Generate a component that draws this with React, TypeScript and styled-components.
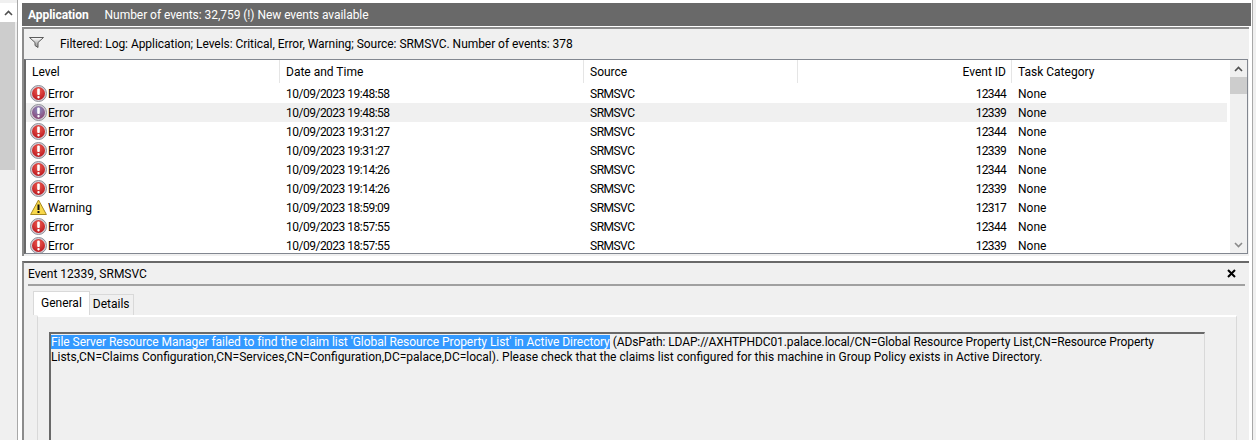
import React from "react";
import styled, { createGlobalStyle } from "styled-components";

const GlobalStyle = createGlobalStyle`
  html, body {
    margin: 0;
    padding: 0;
    height: 440px;
    overflow: hidden;
    background: #f0f0f0;
    font-family: "Roboto", "Liberation Sans", sans-serif;
    font-size: 12px;
    color: #000;
  }
`;

const Screen = styled.div`
  display: flex;
  width: 1256px;
  height: 440px;
  overflow: hidden;
`;

const SideScroll = styled.div`
  width: 17px;
  flex: none;
  display: flex;
  flex-direction: column;
  border-right: 1px solid #a8a8a8;
  padding-top: 3px;
`;

const SideArrow = styled.div`
  height: 19px;
  display: flex;
  align-items: center;
  justify-content: center;
  background: #fff;
`;

const SideThumb = styled.div`
  height: 148px;
  width: 15px;
  background: #cdcdcd;
`;

const Main = styled.div`
  flex: none;
  width: 1235px;
  box-sizing: border-box;
  padding: 3px 1px 0 4px;
  display: flex;
  flex-direction: column;
  background: #fff;
  border-right: 1px solid #a8a8a8;
`;

const TitleBar = styled.div`
  height: 23px;
  flex: none;
  box-sizing: border-box;
  padding: 1px 0 0 6px;
  background: #696969;
  color: #fff;
  display: flex;
  align-items: center;
  gap: 16px;
  line-height: 22px;
  letter-spacing: -0.05px;
`;

const TitleName = styled.span`
  font-weight: 700;
`;

const ListPane = styled.div`
  margin: 1px 2px 0 0;
  height: 229px;
  flex: none;
  background: #f0f0f0;
  border-top: 2px solid #8c8c8c;
  border-left: 2px solid #8c8c8c;
  display: flex;
  flex-direction: column;
  box-sizing: border-box;
`;

const FilterBar = styled.div`
  height: 30px;
  flex: none;
  display: flex;
  align-items: center;
  padding-left: 5px;
  gap: 16px;
  letter-spacing: -0.05px;
`;

const FunnelSlot = styled.div`
  display: flex;
  margin-bottom: 3px;
`;

const Table = styled.div`
  height: 195px;
  box-sizing: border-box;
  flex: none;
  margin: 0 1px 0 0;
  background: #fff;
  border: 1px solid #828790;
  border-left: 2px solid #696969;
  display: flex;
  overflow: hidden;
`;

const TableBody = styled.div`
  flex: 1;
  min-width: 0;
  overflow: hidden;
`;

const columns = "254px 304px 214px 214px 1fr";

const HeaderRow = styled.div`
  display: grid;
  grid-template-columns: ${columns};
  height: 24px;
`;

const HeaderCell = styled.div<{ $right?: boolean }>`
  padding: 0 5px 0 6px;
  line-height: 25px;
  height: 23px;
  border-right: 1px solid #e5e5e5;
  text-align: ${(p) => (p.$right ? "right" : "left")};
  &:last-child {
    border-right: none;
  }
`;

const Row = styled.div<{ $selected?: boolean }>`
  display: grid;
  grid-template-columns: ${columns};
  grid-template-rows: 19px;
  height: 19px;
  line-height: 19px;
  background: ${(p) => (p.$selected ? "#f0f0f0" : "#fff")};
`;

const Cell = styled.div<{ $right?: boolean; $spacing?: number }>`
  padding: 1px 6px 0;
  text-align: ${(p) => (p.$right ? "right" : "left")};
  white-space: nowrap;
  letter-spacing: ${(p) => p.$spacing ?? 0}px;
`;

const LevelCell = styled.div`
  display: flex;
  align-items: center;
  padding-left: 4px;
  gap: 1px;
`;

const LevelLabel = styled.span`
  padding-top: 2px;
`;

const TableScroll = styled.div`
  width: 17px;
  margin-left: 3px;
  flex: none;
  display: flex;
  flex-direction: column;
  background: #f0f0f0;
`;

const ArrowButton = styled.div`
  height: 17px;
  display: flex;
  align-items: center;
  justify-content: center;
`;

const TableThumb = styled.div`
  height: 17px;
  background: #cdcdcd;
`;

const ScrollGap = styled.div`
  flex: 1;
`;

const DetailPane = styled.div`
  margin: 5px 2px 0 0;
  flex: 1;
  background: #f0f0f0;
  border-top: 2px solid #696969;
  border-left: 2px solid #8c8c8c;
  padding: 0 4px 0 4px;
  display: flex;
  flex-direction: column;
  min-height: 0;
`;

const DetailHead = styled.div`
  height: 23px;
  flex: none;
  box-sizing: border-box;
  display: flex;
  align-items: center;
  justify-content: space-between;
  padding: 0 9px 0 0;
  border-bottom: 2px solid #a0a0a0;
`;

const Tabs = styled.div`
  display: flex;
  align-items: flex-end;
  height: 29px;
  flex: none;
  padding-left: 5px;
`;

const Tab = styled.div<{ $active?: boolean }>`
  height: ${(p) => (p.$active ? 24 : 21)}px;
  line-height: ${(p) => (p.$active ? 22 : 19)}px;
  padding: 0 ${(p) => (p.$active ? 7 : 3)}px;
  border: 1px solid #d9d9d9;
  border-bottom: none;
  box-sizing: border-box;
  border-left-width: ${(p) => (p.$active ? 1 : 0)}px;
  background: ${(p) => (p.$active ? "#fff" : "#f0f0f0")};
`;

const TabPanel = styled.div`
  flex: 1;
  margin: 0 8px 0 9px;
  border: 1px solid #d9d9d9;
  border-top: 2px solid #fff;
  border-bottom: none;
  padding: 15px 31px 0 11px;
  min-height: 0;
`;

const Message = styled.div`
  height: 200px;
  border-top: 2px solid #696969;
  border-left: 2px solid #696969;
  border-right: 1px solid #d9d9d9;
  padding: 1px 0 0 0;
  line-height: 15px;
`;

const Highlight = styled.span`
  background: #3399ff;
  color: #fff;
  letter-spacing: -0.05px;
`;

const TightText = styled.span`
  letter-spacing: -0.1px;
`;

const ErrorIcon = ({ faded, id }: { faded?: boolean; id: string }) => (
  <svg width="17" height="17" viewBox="0 0 17 17">
    <defs>
      <radialGradient id={id} cx="50%" cy="30%" r="75%">
        <stop offset="0%" stopColor={faded ? "#8b8fc4" : "#ee5a50"} />
        <stop offset="100%" stopColor={faded ? "#8a3f6e" : "#b8141c"} />
      </radialGradient>
    </defs>
    <circle cx="8.5" cy="8.5" r="8" fill="#d4d0d8" stroke="#8f8f98" strokeWidth="1" />
    <circle cx="8.5" cy="8.5" r="6.5" fill={`url(#${id})`} />
    <rect x="7.2" y="3.5" width="2.6" height="6.5" rx="0.9" fill="#fff" />
    <rect x="7.3" y="11" width="2.4" height="2.4" rx="1.1" fill="#fff" />
  </svg>
);

const WarningIcon = () => (
  <svg width="17" height="17" viewBox="0 0 17 17">
    <path d="M8.5 1 L16.4 15.5 H0.6 Z" fill="#f8d84a" stroke="#a88a20" strokeWidth="1" strokeLinejoin="round" />
    <rect x="7.5" y="5.5" width="2" height="5.5" fill="#111" />
    <rect x="7.5" y="12" width="2" height="2" fill="#111" />
  </svg>
);

const FunnelIcon = () => (
  <svg width="15" height="11" viewBox="0 0 15 11">
    <defs>
      <linearGradient id="funnel" x1="0" y1="0" x2="0" y2="1">
        <stop offset="0%" stopColor="#fff" />
        <stop offset="100%" stopColor="#8a8a8a" />
      </linearGradient>
    </defs>
    <path d="M0.5 0.5 H14.5 L9 5.5 V10.5 L6 8.5 V5.5 Z" fill="url(#funnel)" stroke="#5c5c5c" strokeWidth="1" />
  </svg>
);

const Chevron = ({ down }: { down?: boolean }) => (
  <svg width="9" height="6" viewBox="0 0 9 6">
    <path d={down ? "M1 1 L4.5 4.5 L8 1" : "M1 5 L4.5 1.5 L8 5"} fill="none" stroke={down ? "#8a8a8a" : "#505050"} strokeWidth="1.6" />
  </svg>
);

const CloseIcon = () => (
  <svg width="9" height="9" viewBox="0 0 9 9">
    <path d="M1 1 L8 8 M8 1 L1 8" stroke="#000" strokeWidth="2" />
  </svg>
);

const events = [
  { level: "Error", time: "10/09/2023 19:48:58", id: "12344" },
  { level: "Error", time: "10/09/2023 19:48:58", id: "12339", selected: true },
  { level: "Error", time: "10/09/2023 19:31:27", id: "12344" },
  { level: "Error", time: "10/09/2023 19:31:27", id: "12339" },
  { level: "Error", time: "10/09/2023 19:14:26", id: "12344" },
  { level: "Error", time: "10/09/2023 19:14:26", id: "12339" },
  { level: "Warning", time: "10/09/2023 18:59:09", id: "12317" },
  { level: "Error", time: "10/09/2023 18:57:55", id: "12344" },
  { level: "Error", time: "10/09/2023 18:57:55", id: "12339" },
];

const App: React.FC = () => (
  <>
    <GlobalStyle />
    <Screen>
      <SideScroll>
        <SideArrow>
          <Chevron />
        </SideArrow>
        <SideThumb />
      </SideScroll>
      <Main>
        <TitleBar>
          <TitleName>Application</TitleName>
          <span>Number of events: 32,759 (!) New events available</span>
        </TitleBar>
        <ListPane>
          <FilterBar>
            <FunnelSlot>
              <FunnelIcon />
            </FunnelSlot>
            <span>Filtered: Log: Application; Levels: Critical, Error, Warning; Source: SRMSVC. Number of events: 378</span>
          </FilterBar>
          <Table>
            <TableBody>
              <HeaderRow>
                <HeaderCell>Level</HeaderCell>
                <HeaderCell>Date and Time</HeaderCell>
                <HeaderCell>Source</HeaderCell>
                <HeaderCell $right>Event ID</HeaderCell>
                <HeaderCell>Task Category</HeaderCell>
              </HeaderRow>
              {events.map((e, i) => (
                <Row key={i} $selected={e.selected}>
                  <LevelCell>
                    {e.level === "Warning" ? <WarningIcon /> : <ErrorIcon faded={e.selected} id={`err${i}`} />}
                    <LevelLabel>{e.level}</LevelLabel>
                  </LevelCell>
                  <Cell $spacing={-0.5}>{e.time}</Cell>
                  <Cell $spacing={-0.5}>SRMSVC</Cell>
                  <Cell $right $spacing={-0.7}>{e.id}</Cell>
                  <Cell>None</Cell>
                </Row>
              ))}
            </TableBody>
            <TableScroll>
              <ArrowButton>
                <Chevron />
              </ArrowButton>
              <TableThumb />
              <ScrollGap />
              <ArrowButton>
                <Chevron down />
              </ArrowButton>
            </TableScroll>
          </Table>
        </ListPane>
        <DetailPane>
          <DetailHead>
            <span>Event 12339, SRMSVC</span>
            <CloseIcon />
          </DetailHead>
          <Tabs>
            <Tab $active>General</Tab>
            <Tab>Details</Tab>
          </Tabs>
          <TabPanel>
            <Message>
              <Highlight>File Server Resource Manager failed to find the claim list 'Global Resource Property List' in Active Directory</Highlight>{" "}
              <TightText>(ADsPath: LDAP://AXHTPHDC01.palace.local/CN=Global Resource Property List,CN=Resource Property</TightText>{" "}
              Lists,CN=Claims Configuration,CN=Services,CN=Configuration,DC=palace,DC=local). Please check that the claims list configured for this machine in Group Policy exists in Active Directory.
            </Message>
          </TabPanel>
        </DetailPane>
      </Main>
    </Screen>
  </>
);

export default App;
